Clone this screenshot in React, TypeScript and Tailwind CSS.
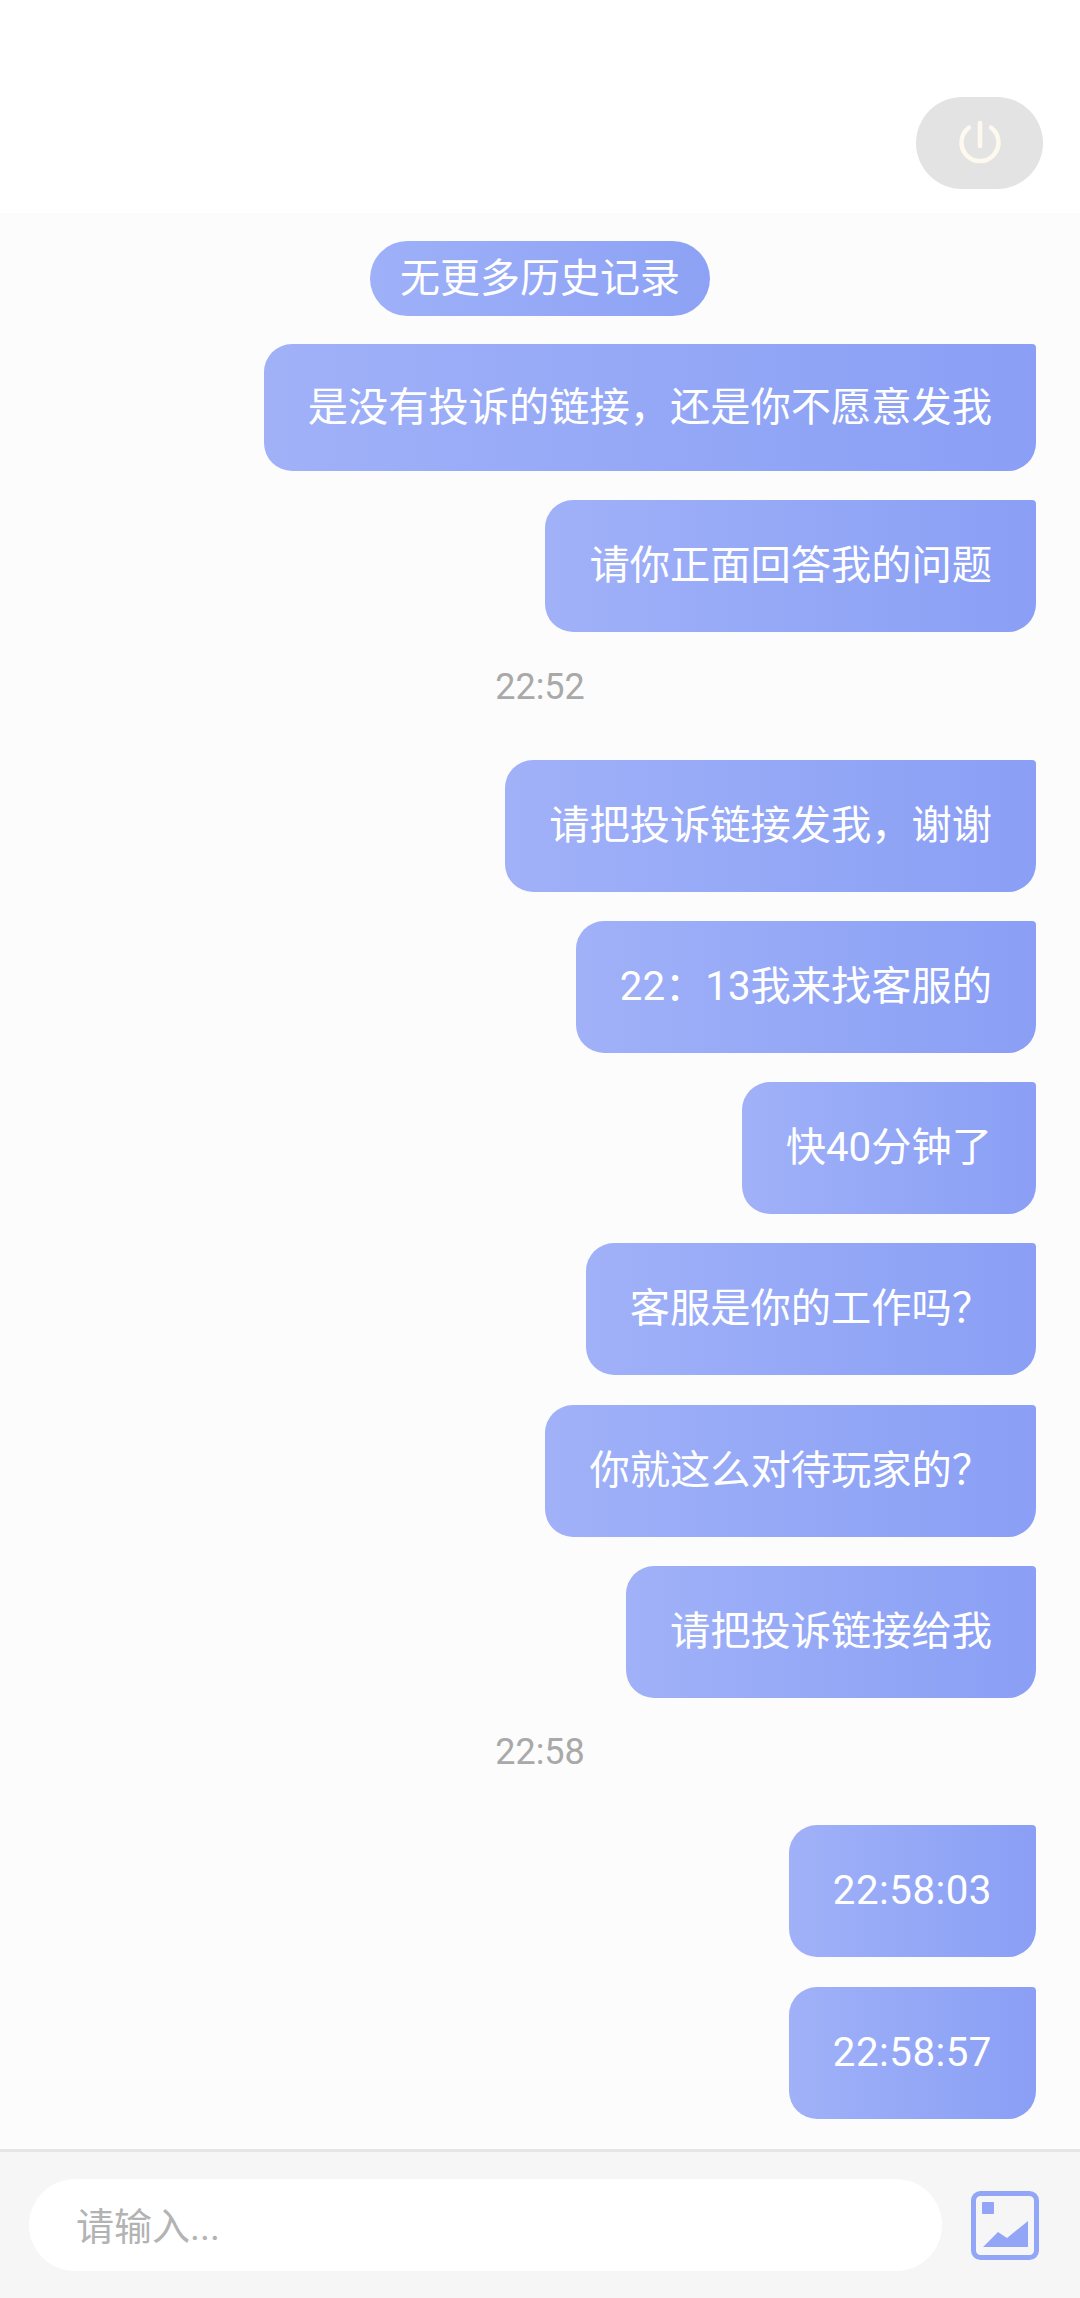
import { clsx } from 'clsx';

const fontStack = "font-['Roboto','Noto_Sans_CJK_SC',sans-serif]";

type Item = { kind: 'msg' | 'time'; text: string; className?: string };

const messages: Item[] = [
  { kind: 'msg', text: '是没有投诉的链接\uFF0C还是你不愿意发我', className: 'h-[127px] leading-[127px]' },
  { kind: 'msg', text: '请你正面回答我的问题', className: 'h-[132px] leading-[132px]' },
  { kind: 'time', text: '22:52' },
  { kind: 'msg', text: '请把投诉链接发我\uFF0C谢谢', className: 'h-[132px] leading-[132px]' },
  { kind: 'msg', text: '22\uFF1A13我来找客服的', className: 'h-[132px] leading-[132px]' },
  { kind: 'msg', text: '快40分钟了', className: 'h-[132px] leading-[132px]' },
  { kind: 'msg', text: '客服是你的工作吗\uFF1F', className: 'h-[132px] leading-[132px]' },
  { kind: 'msg', text: '你就这么对待玩家的\uFF1F', className: 'h-[132px] leading-[132px]' },
  { kind: 'msg', text: '请把投诉链接给我', className: 'h-[132px] leading-[132px]' },
  { kind: 'time', text: '22:58' },
  { kind: 'msg', text: '22:58:03', className: 'h-[132px] leading-[132px] tracking-[0.5px]' },
  { kind: 'msg', text: '22:58:57', className: 'h-[132px] leading-[132px] tracking-[0.5px]' },
];

function PowerIcon() {
  return (
    <svg width="48" height="48" viewBox="0 0 48 48" fill="none" stroke="#fdf9ee" strokeWidth="4.5" strokeLinecap="round">
      <path d="M13 8.6a18.5 18.5 0 1 0 22 0" />
      <path d="M24 4v23" />
    </svg>
  );
}

function ImageIcon() {
  return (
    <svg width="68" height="69" viewBox="0 0 68 69" fill="#93a5f6">
      <rect x="2.5" y="2.5" width="63" height="64" rx="7" fill="none" stroke="#93a5f6" strokeWidth="5" />
      <rect x="11" y="11" width="12" height="12" rx="1" />
      <path d="M12 56 27 41 36 47 57 30V56Z" />
    </svg>
  );
}

export default function App() {
  return (
    <div className={`flex h-[2298px] w-[1080px] flex-col bg-white ${fontStack}`}>
      {/* Top bar */}
      <header className="flex h-[213px] shrink-0 items-start justify-end bg-white pr-[37px] pt-[97px]">
        <button className="flex h-[92px] w-[127px] items-center justify-center rounded-[46px] bg-[#e3e3e3]">
          <PowerIcon />
        </button>
      </header>

      {/* Chat */}
      <main className="flex flex-1 flex-col bg-[#fcfcfc] pr-[44px] pt-[28px]">
        <div className="mb-[28px] ml-[44px] self-center rounded-[38px] bg-gradient-to-r from-[#9db0f8] to-[#8ea2f5] px-[30px] py-[8px] text-[40px] leading-[59px] text-white">
          无更多历史记录
        </div>
        {messages.map((item, i) =>
          item.kind === 'time' ? (
            <div key={i} className="ml-[44px] pb-[53px] pt-[5px] text-center text-[36px] leading-[40px] text-[#a9a9a9]">
              {item.text}
            </div>
          ) : (
            <div
              key={i}
              className={clsx(
                'mb-[29.3px] self-end rounded-[28px] rounded-tr-[4px] bg-gradient-to-r from-[#a0b1f8] to-[#8a9ff5] px-[44px] text-[40.25px] text-white',
                item.className,
              )}
            >
              {item.text}
            </div>
          ),
        )}
      </main>

      {/* Input bar */}
      <footer className="flex h-[149px] shrink-0 items-center border-t-[3px] border-[#e5e5e5] bg-[#f6f6f6] pl-[29px] pr-[41px]">
        <input
          placeholder="请输入..."
          className="h-[92px] w-[913px] rounded-[46px] bg-white px-[47px] pt-[3px] text-[38px] outline-none placeholder:text-[#b3b3b3]"
        />
        <div className="ml-auto">
          <ImageIcon />
        </div>
      </footer>
    </div>
  );
}
